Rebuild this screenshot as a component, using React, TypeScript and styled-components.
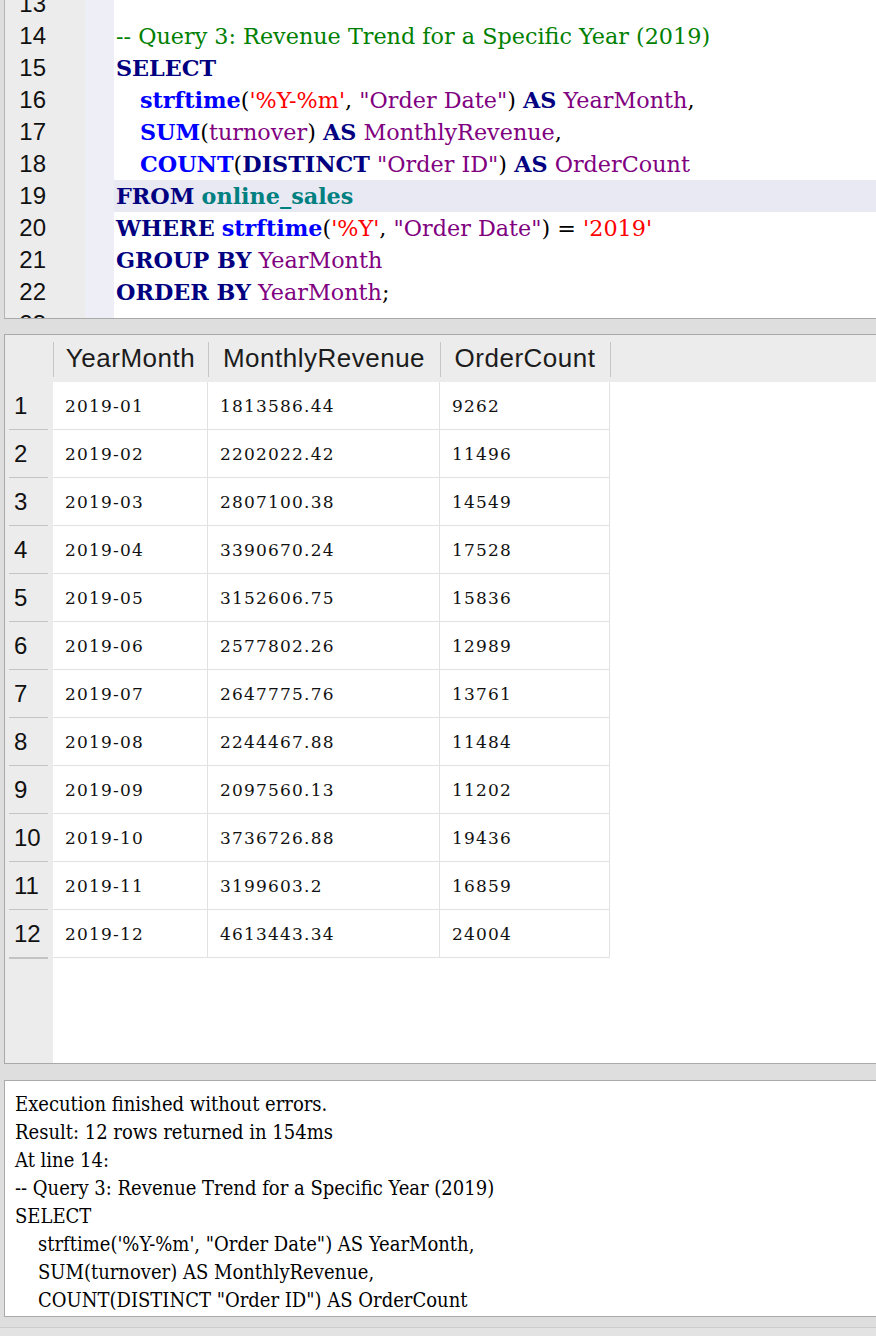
import React from "react";
import styled, { createGlobalStyle } from "styled-components";

const Global = createGlobalStyle`
  html, body { margin: 0; padding: 0; background: #dedede; }
  body { width: 876px; height: 1336px; overflow: hidden; }
`;

const SERIF = `"DejaVu Serif", "Liberation Serif", serif`;
const SANS = `"Liberation Sans", Arial, sans-serif`;

const Window = styled.div`
  width: 876px;
  height: 1336px;
  display: flex;
  flex-direction: column;
  background: #dedede;
  overflow: hidden;
`;

/* ---------- Editor ---------- */
const Editor = styled.section`
  margin-left: 4px;
  height: 318px;
  flex: none;
  border-left: 1px solid #b4b4b4;
  border-bottom: 1px solid #a9a9a9;
  background: #fff;
  overflow: hidden;
`;

const Lines = styled.div`
  margin-top: -12px;
  display: flex;
  flex-direction: column;
`;

const Line = styled.div`
  display: flex;
  height: 32px;
  flex: none;
`;

const LineNo = styled.div`
  width: 80px;
  flex: none;
  box-sizing: border-box;
  padding-right: 39px;
  background: #ececec;
  display: flex;
  align-items: center;
  justify-content: flex-end;
  font-family: ${SANS};
  font-size: 24px;
  color: #111;
`;

const Marker = styled.div`
  width: 29px;
  flex: none;
  background: #eeeef7;
`;

const Code = styled.div<{ $hl?: boolean; $indent?: boolean }>`
  flex: 1;
  display: flex;
  align-items: center;
  padding-left: ${(p) => (p.$indent ? 26 : 2)}px;
  background: ${(p) => (p.$hl ? "#e8e9f3" : "#fff")};
  font-family: ${SERIF};
  font-size: 22.3px;
  white-space: pre;
  color: #000;
`;

type Kind = "kw" | "fn" | "str" | "id" | "tbl" | "cm" | "p";
const colors: Record<Kind, string> = {
  kw: "#000080",
  fn: "#0000ff",
  str: "#ff0000",
  id: "#800080",
  tbl: "#008080",
  cm: "#008000",
  p: "#000000",
};
const Tok = styled.span<{ $k: Kind }>`
  color: ${(p) => colors[p.$k]};
  font-weight: ${(p) => (p.$k === "kw" || p.$k === "fn" || p.$k === "tbl" ? 700 : 400)};
`;

type T = [Kind, string];
const code: { n: number; toks: T[]; indent?: boolean; hl?: boolean }[] = [
  { n: 13, toks: [] },
  { n: 14, toks: [["cm", "-- Query 3: Revenue Trend for a Specific Year (2019)"]] },
  { n: 15, toks: [["kw", "SELECT"]] },
  {
    n: 16,
    indent: true,
    toks: [
      ["fn", "strftime"], ["p", "("], ["str", "'%Y-%m'"], ["p", ", "], ["id", "\"Order Date\""],
      ["p", ") "], ["kw", "AS"], ["p", " "], ["id", "YearMonth"], ["p", ","],
    ],
  },
  {
    n: 17,
    indent: true,
    toks: [
      ["fn", "SUM"], ["p", "("], ["id", "turnover"], ["p", ") "], ["kw", "AS"], ["p", " "],
      ["id", "MonthlyRevenue"], ["p", ","],
    ],
  },
  {
    n: 18,
    indent: true,
    toks: [
      ["fn", "COUNT"], ["p", "("], ["kw", "DISTINCT"], ["p", " "], ["id", "\"Order ID\""],
      ["p", ") "], ["kw", "AS"], ["p", " "], ["id", "OrderCount"],
    ],
  },
  { n: 19, hl: true, toks: [["kw", "FROM"], ["p", " "], ["tbl", "online_sales"]] },
  {
    n: 20,
    toks: [
      ["kw", "WHERE"], ["p", " "], ["fn", "strftime"], ["p", "("], ["str", "'%Y'"], ["p", ", "],
      ["id", "\"Order Date\""], ["p", ") = "], ["str", "'2019'"],
    ],
  },
  { n: 21, toks: [["kw", "GROUP BY"], ["p", " "], ["id", "YearMonth"]] },
  { n: 22, toks: [["kw", "ORDER BY"], ["p", " "], ["id", "YearMonth"], ["p", ";"]] },
  { n: 23, toks: [] },
];

/* ---------- Results ---------- */
const Results = styled.section`
  margin: 15px 0 0 4px;
  height: 728px;
  flex: none;
  border: 1px solid #a9a9a9;
  border-right: none;
  background: #fff;
  display: grid;
  grid-template-columns: 48px 155px 232px 170px 1fr;
  grid-template-rows: 47px repeat(12, 48px) 1fr;
  overflow: hidden;
`;

const HeadCell = styled.div<{ $sep?: boolean }>`
  position: relative;
  background: #ececec;
  display: flex;
  align-items: center;
  justify-content: center;
  font-family: ${SANS};
  font-size: 26px;
  letter-spacing: 0.5px;
  color: #1c1c1c;
  &::before {
    content: "";
    display: ${(p) => (p.$sep ? "block" : "none")};
    position: absolute;
    left: 0;
    top: 7px;
    bottom: 5px;
    width: 1px;
    background: #c6c6c6;
  }
`;

const RowNum = styled.div<{ $line?: boolean }>`
  position: relative;
  background: #ececec;
  display: flex;
  align-items: center;
  padding-left: 9px;
  font-family: ${SANS};
  font-size: 24px;
  color: #111;
  &::after {
    content: "";
    display: ${(p) => (p.$line ? "block" : "none")};
    position: absolute;
    left: 4px;
    right: 5px;
    bottom: -1px;
    height: 2px;
    background: #c3c3c3;
  }
`;

const Cell = styled.div`
  display: flex;
  align-items: center;
  padding-left: 12px;
  border-right: 1px solid #e2e2e2;
  border-bottom: 1px solid #e2e2e2;
  font-family: ${SERIF};
  font-size: 17px;
  letter-spacing: 1.2px;
  color: #111;
`;

const Blank = styled.div<{ $grey?: boolean }>`
  background: ${(p) => (p.$grey ? "#ececec" : "#fff")};
`;

const rows: [string, string, string][] = [
  ["2019-01", "1813586.44", "9262"],
  ["2019-02", "2202022.42", "11496"],
  ["2019-03", "2807100.38", "14549"],
  ["2019-04", "3390670.24", "17528"],
  ["2019-05", "3152606.75", "15836"],
  ["2019-06", "2577802.26", "12989"],
  ["2019-07", "2647775.76", "13761"],
  ["2019-08", "2244467.88", "11484"],
  ["2019-09", "2097560.13", "11202"],
  ["2019-10", "3736726.88", "19436"],
  ["2019-11", "3199603.2", "16859"],
  ["2019-12", "4613443.34", "24004"],
];

/* ---------- Messages ---------- */
const Messages = styled.section`
  margin: 16px 0 0 4px;
  height: 237px;
  flex: none;
  box-sizing: border-box;
  border: 1px solid #a9a9a9;
  border-right: none;
  background: #fff;
  padding: 9px 0 0 10px;
  display: flex;
  flex-direction: column;
`;

const MsgLine = styled.div<{ $indent?: boolean }>`
  height: 28px;
  line-height: 28px;
  padding-left: ${(p) => (p.$indent ? 23 : 0)}px;
  font-family: ${SERIF};
  font-stretch: condensed;
  font-size: 20px;
  color: #000;
  white-space: pre;
`;

const Footer = styled.div`
  margin-top: 10px;
  flex: 1;
  border-top: 1px solid #cdcdcd;
  background: #e3e3e3;
`;

const messages: { t: string; indent?: boolean }[] = [
  { t: "Execution finished without errors." },
  { t: "Result: 12 rows returned in 154ms" },
  { t: "At line 14:" },
  { t: "-- Query 3: Revenue Trend for a Specific Year (2019)" },
  { t: "SELECT" },
  { t: "strftime('%Y-%m', \"Order Date\") AS YearMonth,", indent: true },
  { t: "SUM(turnover) AS MonthlyRevenue,", indent: true },
  { t: "COUNT(DISTINCT \"Order ID\") AS OrderCount", indent: true },
];

export default function App() {
  return (
    <Window>
      <Global />
      <Editor>
        <Lines>
          {code.map((l) => (
            <Line key={l.n}>
              <LineNo>{l.n}</LineNo>
              <Marker />
              <Code $hl={l.hl} $indent={l.indent}>
                {l.toks.map(([k, s], i) => (
                  <Tok key={i} $k={k}>
                    {s}
                  </Tok>
                ))}
              </Code>
            </Line>
          ))}
        </Lines>
      </Editor>

      <Results>
        <HeadCell />
        <HeadCell $sep>YearMonth</HeadCell>
        <HeadCell $sep>MonthlyRevenue</HeadCell>
        <HeadCell $sep>OrderCount</HeadCell>
        <HeadCell $sep />
        {rows.map((r, i) => (
          <React.Fragment key={i}>
            <RowNum $line>{i + 1}</RowNum>
            <Cell>{r[0]}</Cell>
            <Cell>{r[1]}</Cell>
            <Cell>{r[2]}</Cell>
            <Blank />
          </React.Fragment>
        ))}
        <Blank $grey />
        <Blank />
        <Blank />
        <Blank />
        <Blank />
      </Results>

      <Messages>
        {messages.map((m, i) => (
          <MsgLine key={i} $indent={m.indent}>
            {m.t}
          </MsgLine>
        ))}
      </Messages>
      <Footer />
    </Window>
  );
}
